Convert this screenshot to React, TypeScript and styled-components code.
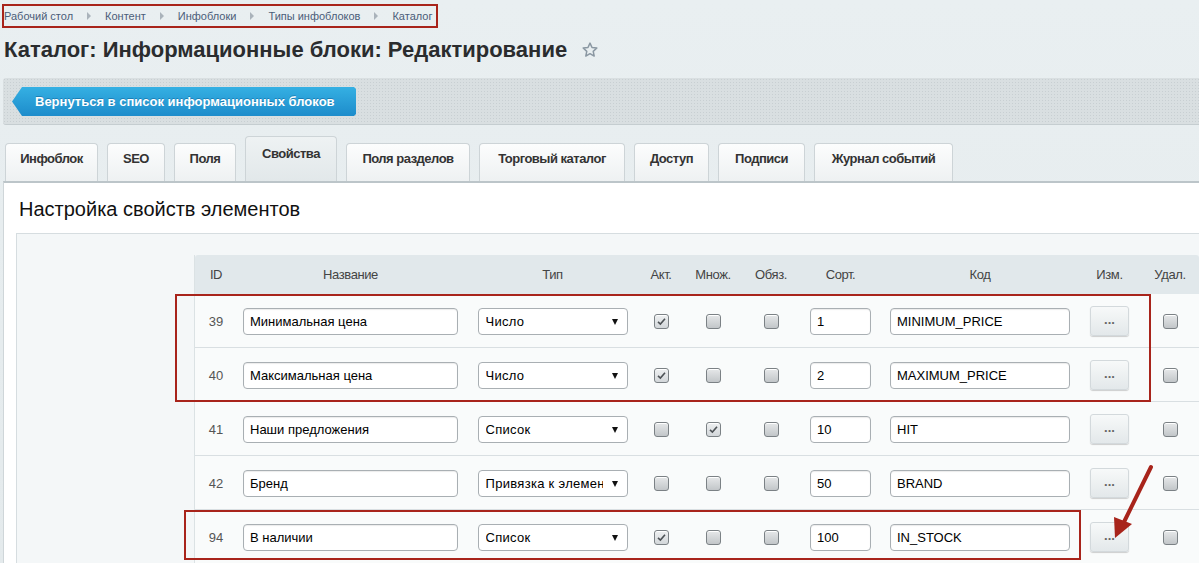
import React from "react";
import styled, { createGlobalStyle } from "styled-components";

const GlobalStyle = createGlobalStyle`
  html, body {
    margin: 0;
    padding: 0;
  }
  body {
    background: #e6ecee;
    font-family: "Liberation Sans", Arial, sans-serif;
    color: #000;
    overflow: hidden;
  }
`;

const Page = styled.div`
  width: 1199px;
  min-height: 563px;
  background: linear-gradient(#e9eff1, #e4eaec);
`;

const Crumbs = styled.div`
  display: inline-flex;
  align-items: center;
  box-sizing: border-box;
  height: 24px;
  margin: 4px 0 0 2px;
  padding: 0 4px 0 0;
  border: 2px solid #a8241b;
  font-size: 11px;
  color: #4b5d79;
`;

const Crumb = styled.span`
  white-space: nowrap;
`;

const CrumbSep = styled.span`
  width: 0;
  height: 0;
  margin: 0 14px;
  border-left: 4px solid #aab3bb;
  border-top: 4px solid transparent;
  border-bottom: 4px solid transparent;
`;

const Title = styled.h1`
  display: flex;
  align-items: center;
  gap: 14px;
  height: 44px;
  margin: 0;
  padding-left: 4px;
  font-size: 22px;
  font-weight: bold;
  color: #2a2c2e;
`;

const ActionBar = styled.div`
  box-sizing: border-box;
  height: 47px;
  margin: 6px 0 0 3px;
  padding: 9px 0 0 9px;
  background-color: #d9dfe1;
  background-image: radial-gradient(#c8cfd2 0.8px, transparent 1px);
  background-size: 3px 3px;
  border-radius: 3px 0 0 3px;
  border-bottom: 1px solid #c5cdd0;
`;

const BackButton = styled.button`
  box-sizing: border-box;
  width: 344px;
  height: 29px;
  padding: 0 0 0 23px;
  border: 0;
  text-align: left;
  white-space: nowrap;
  font-family: "Liberation Sans", Arial, sans-serif;
  font-size: 13px;
  font-weight: bold;
  color: #fff;
  text-shadow: 0 -1px 0 rgba(0, 60, 110, 0.35);
  background: linear-gradient(#35b0e3, #1d8ccb);
  clip-path: polygon(10px 0, calc(100% - 2px) 0, 100% 2px, 100% calc(100% - 2px), calc(100% - 2px) 100%, 10px 100%, 0 50%);
  cursor: pointer;
`;

const TabRow = styled.div`
  display: flex;
  align-items: flex-end;
  gap: 9px;
  height: 45px;
  margin: 11px 0 0 5px;
`;

const Tab = styled.div<{ $w: number; $active?: boolean }>`
  box-sizing: border-box;
  display: flex;
  align-items: center;
  justify-content: center;
  width: ${(p) => p.$w}px;
  height: ${(p) => (p.$active ? 45 : 38)}px;
  padding-bottom: ${(p) => (p.$active ? 12 : 9)}px;
  border: 1px solid #cdd4d7;
  border-bottom: 0;
  border-radius: 4px 4px 0 0;
  background: ${(p) =>
    p.$active ? "linear-gradient(#eef2f3, #e2e8ea)" : "linear-gradient(#fcfdfd, #eef1f2)"};
  font-size: 13px;
  font-weight: bold;
  letter-spacing: -0.5px;
  color: #333;
  white-space: nowrap;
`;

const Panel = styled.div`
  margin-left: 3px;
  padding: 14px 0 0 12px;
  background: #fff;
  border-top: 2px solid #bcc5c9;
  border-left: 1px solid #cfd6d9;
  height: 380px;
`;

const Heading = styled.h2`
  margin: 0 0 12px 3px;
  height: 24px;
  line-height: 24px;
  font-size: 20px;
  font-weight: normal;
  color: #111;
`;

const Inner = styled.div`
  padding: 21px 0 0 177px;
  background: #f4f7f8;
  border: 1px solid #d6dde0;
  border-right: 0;
  height: 400px;
`;

const Table = styled.div`
  position: relative;
  width: 1004px;
  border-left: 1px solid #dbe2e4;
`;

const COLS = "42px 227px 177px 40px 64px 52px 87px 192px 67px 54px";

const HeadRow = styled.div`
  display: grid;
  grid-template-columns: ${COLS};
  align-items: center;
  justify-items: center;
  height: 39px;
  background: #e1e8eb;
  border-radius: 3px 3px 0 0;
  font-size: 13px;
  letter-spacing: -0.4px;
  color: #444;
`;

const Row = styled.div`
  display: grid;
  grid-template-columns: ${COLS};
  align-items: center;
  justify-items: center;
  box-sizing: border-box;
  height: 54px;
  padding-top: 1px;
  background: #f9fbfb;
  border-bottom: 1px solid #d9dfe2;
  font-size: 13px;
  color: #555;
`;

const Field = styled.input<{ $w: number }>`
  box-sizing: border-box;
  width: ${(p) => p.$w}px;
  height: 27px;
  padding: 0 6px;
  border: 1px solid #a9afb3;
  border-radius: 4px;
  background: #fff;
  box-shadow: inset 0 1px 1px rgba(0, 0, 0, 0.08);
  font-family: "Liberation Sans", Arial, sans-serif;
  font-size: 13px;
  color: #000;
  outline: none;
`;

const SelectWrap = styled.div`
  position: relative;
  width: 150px;
  height: 27px;
  &::after {
    content: "";
    position: absolute;
    right: 10px;
    top: 11px;
    border-top: 6px solid #111;
    border-left: 3px solid transparent;
    border-right: 3px solid transparent;
  }
`;

const Select = styled.select`
  box-sizing: border-box;
  width: 100%;
  height: 100%;
  padding: 0 24px 0 7px;
  appearance: none;
  border: 1px solid #a9afb3;
  border-radius: 4px;
  background: #fff;
  font-family: "Liberation Sans", Arial, sans-serif;
  font-size: 13px;
  letter-spacing: 0.3px;
  color: #000;
`;

const Check = styled.span<{ $on?: boolean }>`
  display: inline-flex;
  align-items: center;
  justify-content: center;
  box-sizing: border-box;
  width: 15px;
  height: 15px;
  border: 1px solid #7b8185;
  border-radius: 3px;
  background: ${(p) =>
    p.$on ? "linear-gradient(#eef0f1, #d3d7da)" : "linear-gradient(#e6e8e9, #c2c6c9)"};
  box-shadow: inset 0 1px 0 #fff;
`;

const DotsButton = styled.button`
  box-sizing: border-box;
  width: 39px;
  height: 30px;
  padding: 0 0 3px;
  border: 1px solid #d3d9dc;
  border-radius: 3px;
  background: linear-gradient(#f7f9f9, #e3e8ea);
  box-shadow: 0 1px 1px rgba(0, 0, 0, 0.18);
  font-family: "Liberation Sans", Arial, sans-serif;
  font-size: 13px;
  font-weight: bold;
  color: #666;
`;

const Highlight = styled.div<{ $x: number; $y: number; $w: number; $h: number }>`
  position: absolute;
  left: ${(p) => p.$x}px;
  top: ${(p) => p.$y}px;
  width: ${(p) => p.$w}px;
  height: ${(p) => p.$h}px;
  box-sizing: border-box;
  border: 2px solid #a8241b;
  pointer-events: none;
`;

const Arrow = styled.svg`
  position: absolute;
  left: 915px;
  top: 205px;
  pointer-events: none;
`;

const tabs = [
  { label: "Инфоблок", w: 93 },
  { label: "SEO", w: 58 },
  { label: "Поля", w: 62 },
  { label: "Свойства", w: 92, active: true },
  { label: "Поля разделов", w: 124 },
  { label: "Торговый каталог", w: 146 },
  { label: "Доступ", w: 75 },
  { label: "Подписи", w: 87 },
  { label: "Журнал событий", w: 139 },
];

const heads = ["ID", "Название", "Тип", "Акт.", "Множ.", "Обяз.", "Сорт.", "Код", "Изм.", "Удал."];

const rows = [
  { id: 39, name: "Минимальная цена", type: "Число", act: true, mult: false, req: false, sort: "1", code: "MINIMUM_PRICE" },
  { id: 40, name: "Максимальная цена", type: "Число", act: true, mult: false, req: false, sort: "2", code: "MAXIMUM_PRICE" },
  { id: 41, name: "Наши предложения", type: "Список", act: false, mult: true, req: false, sort: "10", code: "HIT" },
  { id: 42, name: "Бренд", type: "Привязка к элементам", act: false, mult: false, req: false, sort: "50", code: "BRAND" },
  { id: 94, name: "В наличии", type: "Список", act: true, mult: false, req: false, sort: "100", code: "IN_STOCK" },
];

const Tick = ({ on }: { on?: boolean }) => (
  <Check $on={on}>
    {on && (
      <svg width="11" height="11" viewBox="0 0 11 11">
        <path d="M2 5.8 L4.4 8 L9 2.8" fill="none" stroke="#4d5256" strokeWidth="1.6" />
      </svg>
    )}
  </Check>
);

const Star = () => (
  <svg width="18" height="18" viewBox="0 0 24 24">
    <path
      d="M12 2.8l2.7 5.9 6.4.7-4.8 4.4 1.3 6.3L12 16.9l-5.6 3.2 1.3-6.3-4.8-4.4 6.4-.7z"
      fill="none"
      stroke="#8a97a2"
      strokeWidth="2"
      strokeLinejoin="round"
    />
  </svg>
);

const crumbs = ["Рабочий стол", "Контент", "Инфоблоки", "Типы инфоблоков", "Каталог"];

export default function App() {
  return (
    <Page>
      <GlobalStyle />
      <Crumbs>
        {crumbs.map((c, i) => (
          <React.Fragment key={c}>
            {i > 0 && <CrumbSep />}
            <Crumb>{c}</Crumb>
          </React.Fragment>
        ))}
      </Crumbs>
      <Title>
        Каталог: Информационные блоки: Редактирование
        <Star />
      </Title>
      <ActionBar>
        <BackButton>Вернуться в список информационных блоков</BackButton>
      </ActionBar>
      <TabRow>
        {tabs.map((t) => (
          <Tab key={t.label} $w={t.w} $active={t.active}>
            {t.label}
          </Tab>
        ))}
      </TabRow>
      <Panel>
        <Heading>Настройка свойств элементов</Heading>
        <Inner>
          <Table>
            <HeadRow>
              {heads.map((h) => (
                <span key={h}>{h}</span>
              ))}
            </HeadRow>
            {rows.map((r) => (
              <Row key={r.id}>
                <span>{r.id}</span>
                <Field $w={215} value={r.name} readOnly />
                <SelectWrap>
                  <Select value={r.type} onChange={() => {}}>
                    <option>{r.type}</option>
                  </Select>
                </SelectWrap>
                <Tick on={r.act} />
                <Tick on={r.mult} />
                <Tick on={r.req} />
                <Field $w={61} value={r.sort} readOnly />
                <Field $w={180} value={r.code} readOnly />
                <DotsButton>...</DotsButton>
                <Tick />
              </Row>
            ))}
            <Highlight $x={-20} $y={39} $w={976} $h={108} />
            <Highlight $x={-11} $y={255} $w={897} $h={50} />
            <Arrow width="50" height="80" viewBox="0 0 50 80">
              <path d="M41 7 L14 62" stroke="#a8241b" strokeWidth="4" strokeLinecap="round" />
              <path d="M5 78 L4 57 L22 64 Z" fill="#a8241b" />
            </Arrow>
          </Table>
        </Inner>
      </Panel>
    </Page>
  );
}
